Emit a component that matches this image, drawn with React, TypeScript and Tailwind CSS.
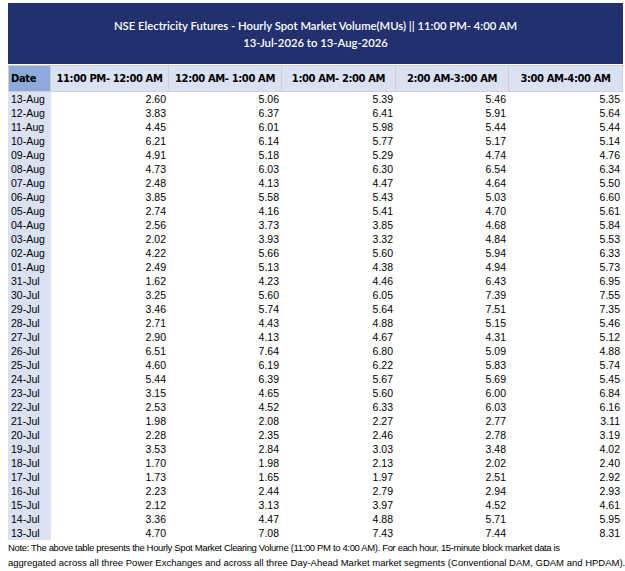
import React from "react";

const rows: [string, string, string, string, string, string][] = [
  ["13-Aug", "2.60", "5.06", "5.39", "5.46", "5.35"],
  ["12-Aug", "3.83", "6.37", "6.41", "5.91", "5.64"],
  ["11-Aug", "4.45", "6.01", "5.98", "5.44", "5.44"],
  ["10-Aug", "6.21", "6.14", "5.77", "5.17", "5.14"],
  ["09-Aug", "4.91", "5.18", "5.29", "4.74", "4.76"],
  ["08-Aug", "4.73", "6.03", "6.30", "6.54", "6.34"],
  ["07-Aug", "2.48", "4.13", "4.47", "4.64", "5.50"],
  ["06-Aug", "3.85", "5.58", "5.43", "5.03", "6.60"],
  ["05-Aug", "2.74", "4.16", "5.41", "4.70", "5.61"],
  ["04-Aug", "2.56", "3.73", "3.85", "4.68", "5.84"],
  ["03-Aug", "2.02", "3.93", "3.32", "4.84", "5.53"],
  ["02-Aug", "4.22", "5.66", "5.60", "5.94", "6.33"],
  ["01-Aug", "2.49", "5.13", "4.38", "4.94", "5.73"],
  ["31-Jul", "1.62", "4.23", "4.46", "6.43", "6.95"],
  ["30-Jul", "3.25", "5.60", "6.05", "7.39", "7.55"],
  ["29-Jul", "3.46", "5.74", "5.64", "7.51", "7.35"],
  ["28-Jul", "2.71", "4.43", "4.88", "5.15", "5.46"],
  ["27-Jul", "2.90", "4.13", "4.67", "4.31", "5.12"],
  ["26-Jul", "6.51", "7.64", "6.80", "5.09", "4.88"],
  ["25-Jul", "4.60", "6.19", "6.22", "5.83", "5.74"],
  ["24-Jul", "5.44", "6.39", "5.67", "5.69", "5.45"],
  ["23-Jul", "3.15", "4.65", "5.60", "6.00", "6.84"],
  ["22-Jul", "2.53", "4.52", "6.33", "6.03", "6.16"],
  ["21-Jul", "1.98", "2.08", "2.27", "2.77", "3.11"],
  ["20-Jul", "2.28", "2.35", "2.46", "2.78", "3.19"],
  ["19-Jul", "3.53", "2.84", "3.03", "3.48", "4.02"],
  ["18-Jul", "1.70", "1.98", "2.13", "2.02", "2.40"],
  ["17-Jul", "1.73", "1.65", "1.97", "2.51", "2.92"],
  ["16-Jul", "2.23", "2.44", "2.79", "2.94", "2.93"],
  ["15-Jul", "2.12", "3.13", "3.97", "4.52", "4.61"],
  ["14-Jul", "3.36", "4.47", "4.88", "5.71", "5.95"],
  ["13-Jul", "4.70", "7.08", "7.43", "7.44", "8.31"],
];

const headers = [
  "11:00 PM- 12:00 AM",
  "12:00 AM- 1:00 AM",
  "1:00 AM- 2:00 AM",
  "2:00 AM-3:00 AM",
  "3:00 AM-4:00 AM",
];

const gridCols = "grid grid-cols-[43px_118px_113px_114px_113px_114px]";

export default function App() {
  return (
    <div className="w-[625px] h-[571px] bg-white pt-[3px] pl-[8px] overflow-hidden">
      <div className="w-[615px]">
        <div className="h-[61px] pt-[1px] bg-[#22316e] flex flex-col items-center justify-center text-white font-['Lato',sans-serif] font-semibold text-[11.3px] leading-[17px]">
          <div>NSE Electricity Futures - Hourly Spot Market Volume(MUs) || 11:00 PM- 4:00 AM</div>
          <div>13-Jul-2026 to 13-Aug-2026</div>
        </div>
        <div className={`${gridCols} mt-[1px] h-[27px] font-['DejaVu_Sans',sans-serif] font-bold text-[10px] tracking-[-0.4px] text-black`}>
          <div className="bg-[#8eaadb] border border-[#d0d0d0] flex items-center pl-[2px]">Date</div>
          {headers.map((h) => (
            <div key={h} className="bg-[#d9e1f2] border-y border-r border-[#d0d0d0] flex items-center justify-center whitespace-nowrap">
              {h}
            </div>
          ))}
        </div>
        <div className="font-['Liberation_Sans',sans-serif] text-[10.5px] text-black">
          {rows.map((r) => (
            <div key={r[0]} className={`${gridCols} h-[14px] leading-[14px]`}>
              <div className="bg-[#d9e1f2] pl-[3px]">{r[0]}</div>
              {r.slice(1).map((v, i) => (
                <div key={i} className="text-right pr-[3px]">
                  {v}
                </div>
              ))}
            </div>
          ))}
        </div>
        <div className="font-['Liberation_Sans',sans-serif] text-[9.5px] leading-[15px] text-black whitespace-nowrap">
          <div className="tracking-[-0.35px]">Note: The above table presents the Hourly Spot Market Clearing Volume (11:00 PM to 4:00 AM). For each hour, 15-minute block market data is</div>
          <div>aggregated across all three Power Exchanges and across all three Day-Ahead Market market segments (Conventional DAM, GDAM and HPDAM).</div>
        </div>
      </div>
    </div>
  );
}
